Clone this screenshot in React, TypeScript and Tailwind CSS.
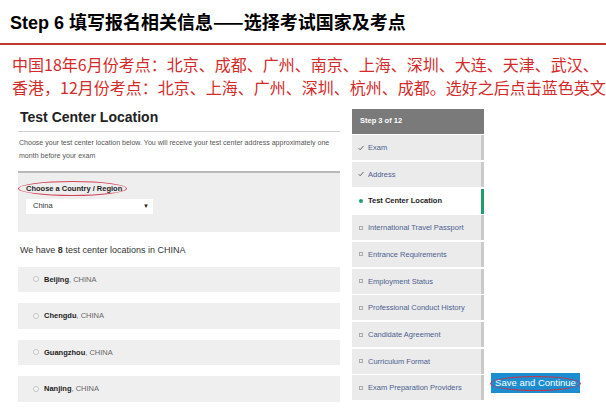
import React from "react";

const sans = { fontFamily: '"Liberation Sans", Arial, sans-serif' };

type Step = { label: string; state: "done" | "active" | "todo" };
const steps: Step[] = [
  { label: "Exam", state: "done" },
  { label: "Address", state: "done" },
  { label: "Test Center Location", state: "active" },
  { label: "International Travel Passport", state: "todo" },
  { label: "Entrance Requirements", state: "todo" },
  { label: "Employment Status", state: "todo" },
  { label: "Professional Conduct History", state: "todo" },
  { label: "Candidate Agreement", state: "todo" },
  { label: "Curriculum Format", state: "todo" },
  { label: "Exam Preparation Providers", state: "todo" },
];

const cities = ["Beijing", "Chengdu", "Guangzhou", "Nanjing"];

function StepIcon({ state }: { state: Step["state"] }) {
  if (state === "done")
    return (
      <svg width="6" height="6" viewBox="0 0 6 6" className="shrink-0">
        <polyline points="0.6,3.2 2.2,4.8 5.4,1" fill="none" stroke="#666" strokeWidth="1" />
      </svg>
    );
  if (state === "active")
    return <span className="block w-[4px] h-[4px] rounded-full bg-[#1f9d6f] shrink-0 ml-[1px] mr-[1px]" />;
  return <span className="block w-[4px] h-[4px] border border-[#aaa] shrink-0 ml-[1px] mr-[1px]" />;
}

export default function App() {
  return (
    <div className="w-[606px] h-[408px] bg-white overflow-hidden flex flex-col">
      {/* Header */}
      <div className="h-[45px] border-b-2 border-[#c0392b] pl-[10px] pt-[8px] shrink-0">
        <div
          className="text-[18px] leading-[26px] font-bold text-black whitespace-nowrap"
          style={{ fontFamily: '"Liberation Sans", "Noto Sans CJK SC", sans-serif' }}
        >
          Step 6 <span style={{ fontFamily: '"Noto Sans CJK SC", sans-serif' }}>填写报名相关信息——选择考试国家及考点</span>
        </div>
      </div>

      {/* Red notes */}
      <div
        className="pl-[12px] pt-[7.5px] text-[16px] leading-[23px] text-[#d42a2a] whitespace-nowrap shrink-0"
        style={{ fontFamily: '"Noto Sans CJK SC", sans-serif' }}
      >
        <div>中国18年6月份考点：北京、成都、广州、南京、上海、深圳、大连、天津、武汉、</div>
        <div>香港，12月份考点：北京、上海、广州、深圳、杭州、成都。选好之后点击蓝色英文</div>
      </div>

      {/* Main */}
      <div className="flex flex-1 min-h-0" style={sans}>
        {/* Left form */}
        <div className="ml-[18px] w-[322px] flex flex-col">
          <div className="pt-[10px] pb-[6px] pl-[2px] border-b border-[#cfcfcf] text-[14px] leading-[16px] font-bold text-[#222]">
            Test Center Location
          </div>
          <div className="mt-[4.5px] pl-[1px] text-[7.05px] leading-[13px] text-[#555]">
            Choose your test center location below. You will receive your test center address approximately one month before your exam
          </div>
          <div className="mt-[8.5px] bg-[#efeeef] border-t-2 border-[#b9b9b9] h-[61px] pl-[8px] pt-[11px]">
            <div className="relative text-[7.5px] leading-[10px] font-bold text-[#222]">
              Choose a Country / Region
              <span className="absolute left-[-8px] top-[-3px] w-[109px] h-[15px] rounded-[50%] border-[1.5px] border-[#d2475a]" />
            </div>
            <div className="mt-[5px] w-[127px] h-[15px] bg-white flex items-center justify-between pl-[7px] pr-[4px]">
              <span className="text-[7.5px] text-[#333]">China</span>
              <span className="text-[6px] text-[#222]">▼</span>
            </div>
          </div>
          <div className="mt-[12px] pl-[2px] text-[9px] leading-[12px] text-[#333]">
            We have <span className="font-bold">8</span> test center locations in CHINA
          </div>
          <div className="mt-[11px] flex flex-col gap-[11px]">
            {cities.map((c) => (
              <div key={c} className="h-[25.5px] bg-[#f0eff0] flex items-center pl-[15px]">
                <span className="block w-[6px] h-[6px] rounded-full border border-[#c4c4c4] bg-[#f7f7f7] shrink-0" />
                <span className="ml-[5px] text-[7.5px] text-[#666]">
                  <span className="font-bold text-[#222]">{c}</span>, CHINA
                </span>
              </div>
            ))}
          </div>
        </div>

        {/* Sidebar */}
        <div className="ml-[12px] w-[132px] pt-[10px] flex flex-col">
          <div className="h-[25px] bg-[#7a7a7a] flex items-center pl-[8px] text-[7.5px] font-bold text-white shrink-0">
            Step 3 of 12
          </div>
          {steps.map((s) => (
            <div
              key={s.label}
              className={
                "mt-[1.7px] h-[25px] shrink-0 flex items-center pl-[6px] gap-[4px] border-r-[3px] " +
                (s.state === "active" ? "bg-white border-[#1f9d6f]" : "bg-[#ecebec] border-[#cacaca]")
              }
            >
              <StepIcon state={s.state} />
              <span
                className={
                  "text-[7.5px] whitespace-nowrap " +
                  (s.state === "active" ? "font-bold text-[#1a1a1a]" : "text-[#4b5f8e]")
                }
              >
                {s.label}
              </span>
            </div>
          ))}
        </div>

        {/* Button */}
        <div className="ml-[7px] self-end mb-[15px]">
          <div className="relative w-[89px] h-[20px] bg-[#1b8dd0] flex items-center justify-center text-[9.5px] text-white whitespace-nowrap">
            Save and Continue
            <span className="absolute left-[-1px] top-[3px] w-[91px] h-[15px] rounded-[50%] border-[1.5px] border-[#c2364a]" />
          </div>
        </div>
      </div>
    </div>
  );
}
